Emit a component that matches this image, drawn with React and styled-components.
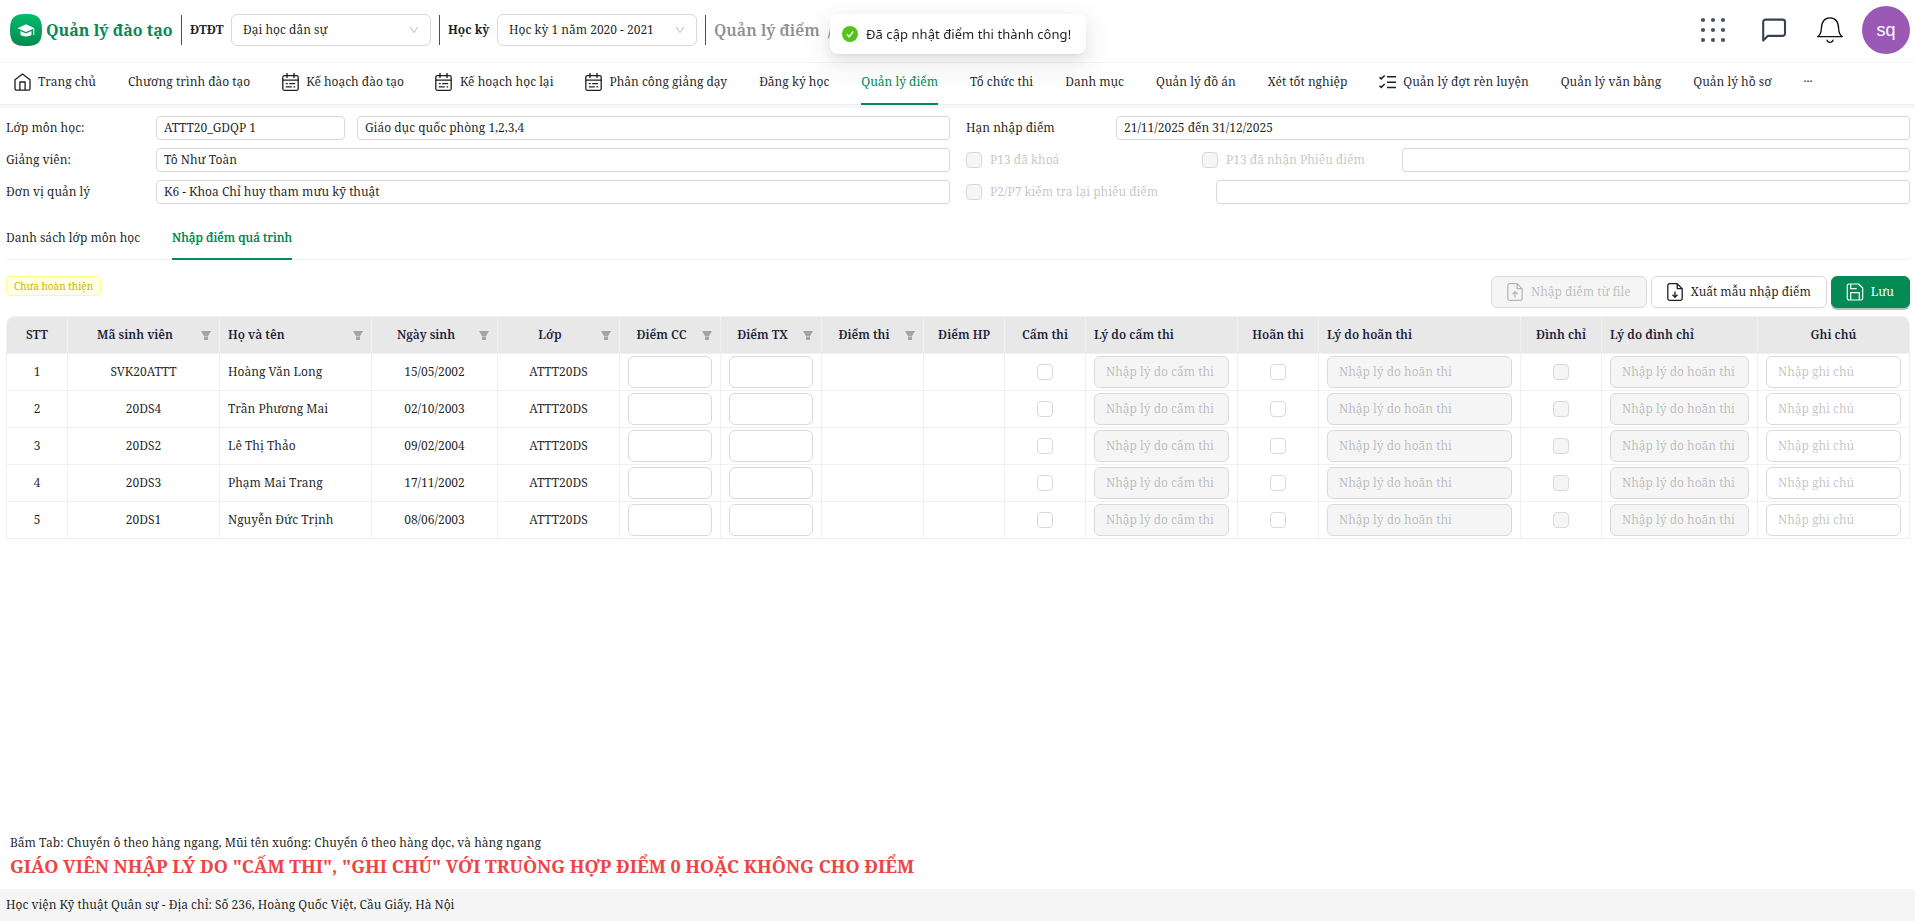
import React from 'react';
import styled, { createGlobalStyle, css } from 'styled-components';

const GlobalStyle = createGlobalStyle`
  * {
    box-sizing: border-box;
  }
  body {
    margin: 0;
    background: #fff;
    color: rgba(0, 0, 0, 0.88);
    font-family: "Noto Serif", "Liberation Serif", serif;
    font-size: 12px;
    line-height: 20px;
  }
  input, button {
    font-family: inherit;
    font-size: 12px;
    color: inherit;
  }
  svg {
    display: block;
    flex-shrink: 0;
  }
`;

const Page = styled.div`
  display: flex;
  flex-direction: column;
  height: 921px;
  overflow: hidden;
`;

/* header */

const Header = styled.header`
  display: flex;
  align-items: center;
  height: 63px;
  padding: 0 5px 3px 10px;
  border-bottom: 1px solid #f5f5f5;
`;

const AppTitle = styled.div`
  margin-left: 4px;
  width: 127px;
  font-size: 16px;
  font-weight: 700;
  color: #048a54;
  white-space: nowrap;
`;

const Divider = styled.div`
  width: 1px;
  height: 30px;
  margin: 0 8px;
  background: #007a48;
`;

const SelectLabel = styled.div`
  width: ${({ w }) => w}px;
  font-weight: 700;
  white-space: nowrap;
`;

const Select = styled.div`
  display: flex;
  align-items: center;
  justify-content: space-between;
  width: 200px;
  height: 32px;
  padding: 0 11px;
  border: 1px solid #d9d9d9;
  border-radius: 6px;
`;

const Breadcrumb = styled.div`
  display: flex;
  gap: 8px;
  font-size: 16px;
  font-weight: 600;
  color: #8f8f8f;
  white-space: nowrap;
`;

const HeaderActions = styled.div`
  display: flex;
  align-items: center;
  margin-left: auto;
`;

const IconButton = styled.button`
  display: flex;
  align-items: center;
  justify-content: center;
  width: 32px;
  height: 32px;
  padding: 0;
  margin-right: ${({ gap }) => gap}px;
  border: 0;
  background: none;
`;

const Avatar = styled.div`
  display: flex;
  align-items: center;
  justify-content: center;
  width: 48px;
  height: 48px;
  border-radius: 50%;
  background: #9b59b6;
  color: #fff;
  font-family: "Liberation Sans", Arial, sans-serif;
  font-size: 18px;
`;

/* main menu */

const Menu = styled.nav`
  display: flex;
  height: 42px;
  padding-left: 14px;
  gap: 32px;
  border-bottom: 1px solid #f0f0f0;
`;

const MenuItem = styled.div`
  display: flex;
  align-items: center;
  gap: 8px;
  height: 42px;
  padding-bottom: 4px;
  white-space: nowrap;
  svg {
    margin: 0 -0.5px;
  }
  ${({ active }) => active && css`
    color: #048a54;
    box-shadow: inset 0 -2px 0 #048a54;
  `}
`;

const Strip = styled.div`
  height: 3px;
  background: #f3f6fa;
`;

/* class info form */

const Content = styled.main`
  flex: 1;
  padding: 8px 5px 0 6px;
`;

const Form = styled.div`
  display: grid;
  grid-template-columns: 944px 944px;
  column-gap: 16px;
  row-gap: 8px;
`;

const FormRow = styled.div`
  display: flex;
  align-items: center;
  height: 24px;
`;

const Label = styled.label`
  width: 150px;
`;

const TextInput = styled.input`
  ${({ w }) => (w ? `width: ${w}px;` : 'flex: 1; min-width: 0;')}
  height: 24px;
  margin-right: ${({ gap }) => gap || 0}px;
  padding: 0 7px 1px;
  border: 1px solid #d9d9d9;
  border-radius: 4px;
  background: #fff;
  outline: none;
`;

const CheckField = styled.label`
  display: flex;
  align-items: center;
  gap: 8px;
  width: ${({ w }) => w}px;
  color: rgba(0, 0, 0, 0.25);
`;

const Checkbox = styled.input.attrs({ type: 'checkbox' })`
  appearance: none;
  display: block;
  width: 16px;
  height: 16px;
  margin: 0;
  border: 1px solid #d9d9d9;
  border-radius: 4px;
  background: ${({ disabled }) => (disabled ? '#f5f5f5' : '#fff')};
`;

const Tabs = styled.div`
  display: flex;
  gap: 32px;
  height: 44px;
  margin-top: 12px;
  border-bottom: 1px solid #f0f0f0;
`;

const Tab = styled.div`
  display: flex;
  align-items: center;
  height: 44px;
  ${({ active }) => active && css`
    color: #048a54;
    text-shadow: 0 0 0.25px currentcolor;
    box-shadow: inset 0 -2px 0 #048a54;
  `}
`;

const Toolbar = styled.div`
  display: flex;
  justify-content: space-between;
  align-items: flex-start;
  height: 40px;
  margin-top: 16px;
`;

const Tag = styled.span`
  height: 20px;
  padding: 0 7px;
  border: 1px solid #fffb8f;
  border-radius: 4px;
  background: #feffe6;
  color: #d4b106;
  font-size: 10px;
  line-height: 18px;
`;

const Buttons = styled.div`
  display: flex;
  gap: 4px;
`;

const Button = styled.button`
  display: flex;
  align-items: center;
  gap: 8px;
  height: 32px;
  padding: 0 15px 1px;
  border: 1px solid #d9d9d9;
  border-radius: 6px;
  background: #fff;
  box-shadow: 0 2px 0 rgba(0, 0, 0, 0.02);
  white-space: nowrap;
  &:disabled {
    background: #f5f5f5;
    color: rgba(0, 0, 0, 0.25);
    box-shadow: none;
  }
  ${({ primary }) => primary && css`
    border-color: #048a54;
    background: #048a54;
    color: #fff;
    box-shadow: 0 2px 0 #b4bfba;
  `}
`;

/* score table */

const Table = styled.table`
  width: 1904px;
  table-layout: fixed;
  border-collapse: separate;
  border-spacing: 0;
  border-left: 1px solid #f0f0f0;
  border-top: 1px solid #f0f0f0;
  border-radius: 8px 8px 0 0;
`;

const Th = styled.th`
  height: 37px;
  padding: 0 8px;
  border-right: 1px solid #f0f0f0;
  border-bottom: 1px solid #f0f0f0;
  background: #e8e8e8;
  color: #1f1f3d;
  font-weight: 600;
  text-align: ${({ align }) => align};
  &:first-child {
    border-top-left-radius: 8px;
  }
  &:last-child {
    border-top-right-radius: 8px;
  }
`;

const ThInner = styled.div`
  display: flex;
  align-items: center;
  padding-bottom: 1px;
  white-space: nowrap;
  span {
    flex: 1;
  }
  svg {
    margin: 1px 0 0 7px;
  }
`;

const Td = styled.td`
  height: 37px;
  padding: 2px 8px;
  border-right: 1px solid #f0f0f0;
  border-bottom: 1px solid #f0f0f0;
  text-align: ${({ align }) => align};
  ${Checkbox} {
    margin: 0 auto;
  }
`;

const CellInput = styled.input`
  display: block;
  width: 100%;
  height: 32px;
  padding: 0 11px 1px;
  border: 1px solid #d9d9d9;
  border-radius: 6px;
  background: ${({ disabled }) => (disabled ? '#f5f5f5' : '#fff')};
  outline: none;
  &::placeholder {
    color: rgba(0, 0, 0, 0.25);
    opacity: 1;
  }
`;

/* bottom */

const Notes = styled.div`
  padding: 0 10px;
  height: 56px;
`;

const Warning = styled.div`
  font-size: 18px;
  font-weight: 700;
  line-height: 27px;
  color: #ef4444;
`;

const Footer = styled.footer`
  height: 32px;
  padding: 6px;
  background: #f5f5f5;
`;

const Toast = styled.div`
  position: fixed;
  top: 14px;
  left: 830px;
  display: flex;
  align-items: center;
  gap: 8px;
  width: 256px;
  height: 40px;
  padding: 0 12px;
  border-radius: 8px;
  background: #fff;
  box-shadow: 0 6px 16px 0 rgba(0, 0, 0, 0.08), 0 3px 6px -4px rgba(0, 0, 0, 0.12), 0 9px 28px 8px rgba(0, 0, 0, 0.05);
  font-family: "Noto Sans", "Open Sans", sans-serif;
  font-size: 13px;
  letter-spacing: 0.06px;
  white-space: nowrap;
`;

/* icons */

const Logo = () => (
  <svg width="32" height="32" viewBox="0 0 32 32">
    <defs>
      <linearGradient id="logo" x1="0" y1="0" x2="0" y2="1">
        <stop offset="0" stopColor="#00bd6b" />
        <stop offset="1" stopColor="#04884f" />
      </linearGradient>
    </defs>
    <path d="M16 0C27 0 32 3 32 16S27 32 16 32 0 29 0 16 5 0 16 0z" fill="url(#logo)" />
    <path d="M7.500 14.200 16 10.200l8.500 4L16 18z" fill="#fff" />
    <path d="M10.500 17v3.800c1.600 2.200 9.400 2.200 11 0V17L16 19.400z" fill="#fff" />
    <path d="M23.800 14.500v6.500" stroke="#fff" strokeWidth="1" />
  </svg>
);

const Chevron = () => (
  <svg width="10" height="10" viewBox="0 0 10 10" fill="none" stroke="#b8b8b8" strokeWidth="1">
    <path d="M1.200 2 5 7.600 8.800 2" />
  </svg>
);

const DotsIcon = () => (
  <svg width="26" height="26" viewBox="0 0 26 26" fill="#475364">
    {[3, 13, 23].map((y) => [3, 13, 23].map((x) => <circle key={`${x}-${y}`} cx={x} cy={y} r="2.100" />))}
  </svg>
);

const ChatIcon = () => (
  <svg width="26" height="26" viewBox="0 0 26 26" fill="none" stroke="#374151" strokeWidth="2.100" strokeLinejoin="round">
    <path d="M2.200 23.500V5a2.400 2.400 0 0 1 2.400-2.400h17A2.400 2.400 0 0 1 24 5v11.500a2.400 2.400 0 0 1-2.400 2.400H6.700z" />
  </svg>
);

const BellIcon = () => (
  <svg width="28" height="28" viewBox="0 0 28 28" fill="none" stroke="#111" strokeWidth="1.300" strokeLinecap="round" strokeLinejoin="round">
    <path d="M1.700 20.600h24.600C23.800 19 22.900 17 22.700 13 22.500 5.500 20 1.800 14 1.800S5.500 5.500 5.300 13c-.2 4-1.100 6-3.600 7.600z" />
    <path d="M11 24.200c.8 3 5.200 3 6 0" />
  </svg>
);

const HomeIcon = () => (
  <svg width="17" height="18" viewBox="0 0 17 18" fill="none" stroke="currentColor" strokeWidth="1.300" strokeLinejoin="round">
    <path d="M1 6.700 8.500.9 16 6.700v8.800a1.700 1.700 0 0 1-1.700 1.700H2.700A1.700 1.700 0 0 1 1 15.500z" />
    <path d="M5.900 17V9h5.200v8" />
  </svg>
);

const CalendarIcon = () => (
  <svg width="17" height="18" viewBox="0 0 17 18" fill="none" stroke="currentColor" strokeWidth="1.300">
    <rect x=".8" y="2.700" width="15.400" height="14.600" rx="1.500" />
    <path d="M.8 7.200h15.400M5 0v5M12 0v5M3.800 10.700h2M7.200 10.700h6M3.800 13.900h6M11.500 13.900h1.700" />
  </svg>
);

const ListIcon = () => (
  <svg width="17" height="14" viewBox="0 0 17 14" fill="none" stroke="currentColor" strokeWidth="1.500">
    <path d="M8 1.800h9M8 7.200h9M8 12.600h9M.5 2.200l1.700 1.700L5.700.5M.5 10.700l1.700 1.700L5.700 9" />
  </svg>
);

const FileIcon = ({ up }) => (
  <svg width="16" height="18" viewBox="0 0 16 18" fill="none" stroke="currentColor" strokeWidth="1.300" strokeLinejoin="round">
    <path d="M10.200.7H2.500A1.700 1.700 0 0 0 .8 2.400v13.200a1.700 1.700 0 0 0 1.700 1.700h11a1.700 1.700 0 0 0 1.700-1.700V5.600zM10.200.7v4.900h5" />
    <path d={up ? 'M8 14.500V9M5.500 11.300 8 8.800l2.500 2.500' : 'M8 8.500V14M5.500 11.700 8 14.200l2.500-2.500'} />
  </svg>
);

const SaveIcon = () => (
  <svg width="16" height="18" viewBox="0.500 0 16 18" fill="none" stroke="currentColor" strokeWidth="1.200" strokeLinejoin="round" overflow="visible">
    <path d="M12 1H2.500A1.700 1.700 0 0 0 .8 2.700v12.600A1.700 1.700 0 0 0 2.500 17h12a1.700 1.700 0 0 0 1.700-1.700V5z" />
    <path d="M4.200 17V9.700h8.600V17M4.200 1v4.700h6" />
  </svg>
);

const FilterIcon = () => (
  <svg width="10" height="9" viewBox="0 0 10 9" fill="#a3a3a3">
    <path d="M0 0h10L7 5H3zM3 5.600h4V9H3z" />
  </svg>
);

const SuccessIcon = () => (
  <svg width="16" height="16" viewBox="0 0 16 16">
    <circle cx="8" cy="8" r="8" fill="#52c41a" />
    <path d="M4.800 8.200 7.200 10.800 11.200 5.400" fill="none" stroke="#fff" strokeWidth="1.400" />
  </svg>
);

const menu = [
  { label: 'Trang chủ', icon: <HomeIcon /> },
  { label: 'Chương trình đào tạo' },
  { label: 'Kế hoạch đào tạo', icon: <CalendarIcon /> },
  { label: 'Kế hoạch học lại', icon: <CalendarIcon /> },
  { label: 'Phân công giảng dạy', icon: <CalendarIcon /> },
  { label: 'Đăng ký học' },
  { label: 'Quản lý điểm', active: true },
  { label: 'Tổ chức thi' },
  { label: 'Danh mục' },
  { label: 'Quản lý đồ án' },
  { label: 'Xét tốt nghiệp' },
  { label: 'Quản lý đợt rèn luyện', icon: <ListIcon /> },
  { label: 'Quản lý văn bằng' },
  { label: 'Quản lý hồ sơ' },
  { label: '···' },
];

const columns = [
  { title: 'STT', width: 61, render: (r, i) => i + 1 },
  { title: 'Mã sinh viên', width: 152, filter: true, render: (r) => r.code },
  { title: 'Họ và tên', width: 152, filter: true, align: 'left', render: (r) => r.name },
  { title: 'Ngày sinh', width: 126, filter: true, render: (r) => r.birthday },
  { title: 'Lớp', width: 122, filter: true, render: () => 'ATTT20DS' },
  { title: 'Điểm CC', width: 101, filter: true, render: () => <CellInput /> },
  { title: 'Điểm TX', width: 101, filter: true, render: () => <CellInput /> },
  { title: 'Điểm thi', width: 102, filter: true },
  { title: 'Điểm HP', width: 81 },
  { title: 'Cấm thi', width: 81, render: () => <Checkbox /> },
  { title: 'Lý do cấm thi', width: 152, align: 'left', render: () => <CellInput disabled placeholder="Nhập lý do cấm thi" /> },
  { title: 'Hoãn thi', width: 81, render: () => <Checkbox /> },
  { title: 'Lý do hoãn thi', width: 202, align: 'left', render: () => <CellInput disabled placeholder="Nhập lý do hoãn thi" /> },
  { title: 'Đình chỉ', width: 81, render: () => <Checkbox disabled /> },
  { title: 'Lý do đình chỉ', width: 156, align: 'left', render: () => <CellInput disabled placeholder="Nhập lý do hoãn thi" /> },
  { title: 'Ghi chú', width: 152, render: () => <CellInput placeholder="Nhập ghi chú" /> },
];

const students = [
  { code: 'SVK20ATTT', name: 'Hoàng Văn Long', birthday: '15/05/2002' },
  { code: '20DS4', name: 'Trần Phương Mai', birthday: '02/10/2003' },
  { code: '20DS2', name: 'Lê Thị Thảo', birthday: '09/02/2004' },
  { code: '20DS3', name: 'Phạm Mai Trang', birthday: '17/11/2002' },
  { code: '20DS1', name: 'Nguyễn Đức Trịnh', birthday: '08/06/2003' },
];

const ScoreTable = () => (
  <Table>
    <colgroup>
      {columns.map((c) => <col key={c.title} width={c.width} />)}
    </colgroup>
    <thead>
      <tr>
        {columns.map((c) => (
          <Th key={c.title} align={c.align || 'center'}>
            <ThInner>
              <span>{c.title}</span>
              {c.filter && <FilterIcon />}
            </ThInner>
          </Th>
        ))}
      </tr>
    </thead>
    <tbody>
      {students.map((s, i) => (
        <tr key={s.code}>
          {columns.map((c) => (
            <Td key={c.title} align={c.align || 'center'}>{c.render && c.render(s, i)}</Td>
          ))}
        </tr>
      ))}
    </tbody>
  </Table>
);

const App = () => {
  return (
    <Page>
      <GlobalStyle />
      <Header>
        <Logo />
        <AppTitle>Quản lý đào tạo</AppTitle>
        <Divider />
        <SelectLabel w={41}>ĐTĐT</SelectLabel>
        <Select>Đại học dân sự<Chevron /></Select>
        <Divider />
        <SelectLabel w={49}>Học kỳ</SelectLabel>
        <Select>Học kỳ 1 năm 2020 - 2021<Chevron /></Select>
        <Divider />
        <Breadcrumb><span>Quản lý điểm</span><span>/</span></Breadcrumb>
        <HeaderActions>
          <IconButton gap={29}><DotsIcon /></IconButton>
          <IconButton gap={24}><ChatIcon /></IconButton>
          <IconButton gap={16}><BellIcon /></IconButton>
          <Avatar>sq</Avatar>
        </HeaderActions>
      </Header>
      <Menu>
        {menu.map((m) => (
          <MenuItem key={m.label} active={m.active}>{m.icon}{m.label}</MenuItem>
        ))}
      </Menu>
      <Strip />
      <Content>
        <Form>
          <FormRow>
            <Label>Lớp môn học:</Label>
            <TextInput w={189} gap={12} defaultValue="ATTT20_GDQP 1" />
            <TextInput defaultValue="Giáo dục quốc phòng 1,2,3,4" />
          </FormRow>
          <FormRow>
            <Label>Hạn nhập điểm</Label>
            <TextInput defaultValue="21/11/2025 đến 31/12/2025" />
          </FormRow>
          <FormRow>
            <Label>Giảng viên:</Label>
            <TextInput defaultValue="Tô Như Toàn" />
          </FormRow>
          <FormRow>
            <CheckField w={236}><Checkbox disabled />P13 đã khoá</CheckField>
            <CheckField w={200}><Checkbox disabled />P13 đã nhận Phiếu điểm</CheckField>
            <TextInput />
          </FormRow>
          <FormRow>
            <Label>Đơn vị quản lý</Label>
            <TextInput defaultValue="K6 - Khoa Chỉ huy tham mưu kỹ thuật" />
          </FormRow>
          <FormRow>
            <CheckField w={250}><Checkbox disabled />P2/P7 kiểm tra lại phiếu điểm</CheckField>
            <TextInput />
          </FormRow>
        </Form>
        <Tabs>
          <Tab>Danh sách lớp môn học</Tab>
          <Tab active>Nhập điểm quá trình</Tab>
        </Tabs>
        <Toolbar>
          <Tag>Chưa hoàn thiện</Tag>
          <Buttons>
            <Button disabled><FileIcon up />Nhập điểm từ file</Button>
            <Button><FileIcon />Xuất mẫu nhập điểm</Button>
            <Button primary><SaveIcon />Lưu</Button>
          </Buttons>
        </Toolbar>
        <ScoreTable />
      </Content>
      <Notes>
        <div>Bấm Tab: Chuyển ô theo hàng ngang, Mũi tên xuống: Chuyển ô theo hàng dọc, và hàng ngang</div>
        <Warning>GIÁO VIÊN NHẬP LÝ DO "CẤM THI", "GHI CHÚ" VỚI TRUÒNG HỢP ĐIỂM 0 HOẶC KHÔNG CHO ĐIỂM</Warning>
      </Notes>
      <Footer>Học viện Kỹ thuật Quân sự - Địa chỉ: Số 236, Hoàng Quốc Việt, Cầu Giấy, Hà Nội</Footer>
      <Toast><SuccessIcon />Đã cập nhật điểm thi thành công!</Toast>
    </Page>
  );
};

export default App;
